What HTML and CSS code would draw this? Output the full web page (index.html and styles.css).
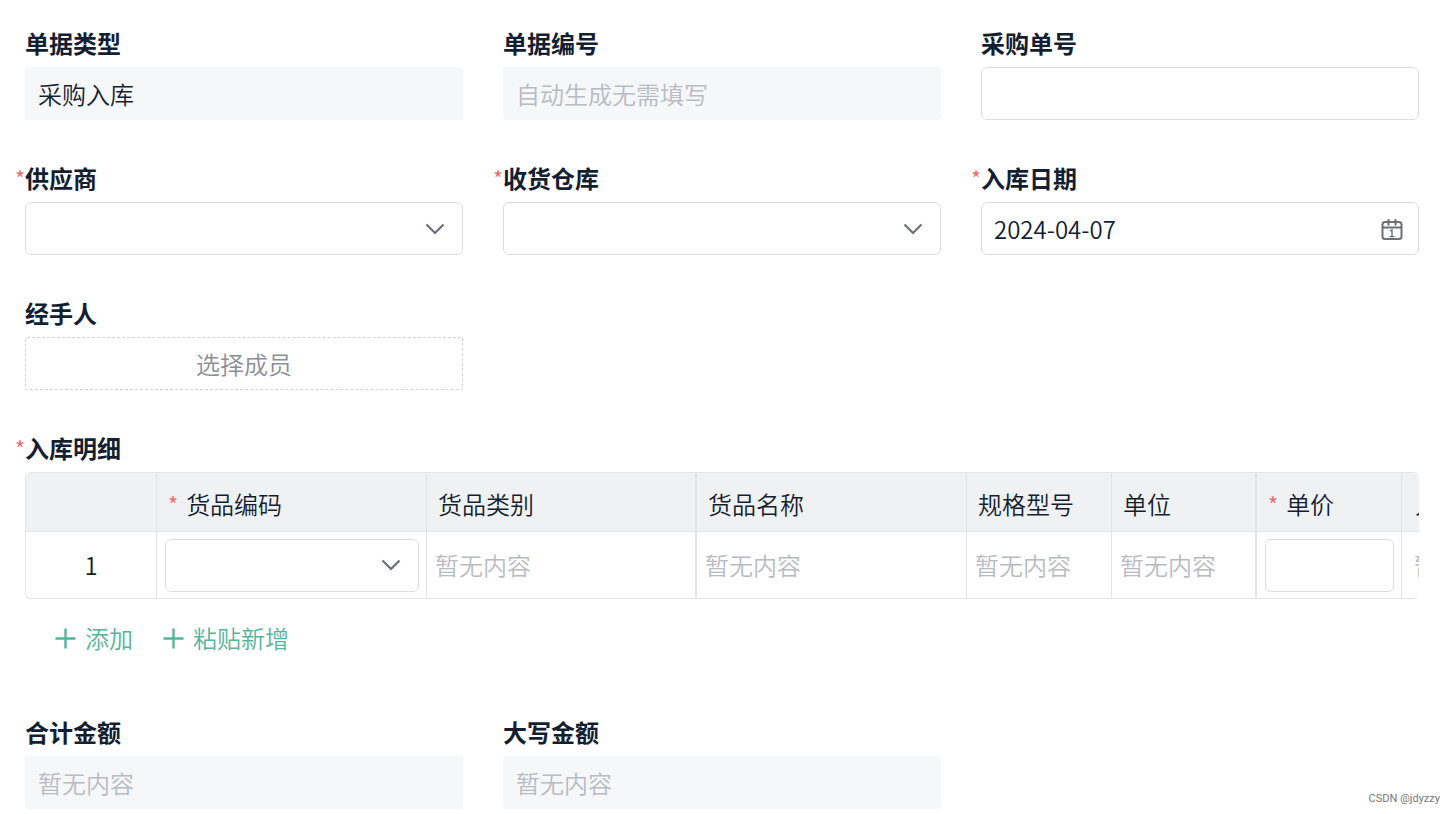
FILE: index.html
```html
<!DOCTYPE html>
<html lang="zh-CN">
<head>
<meta charset="utf-8">
<meta name="viewport" content="width=device-width, initial-scale=1">
<title>采购入库</title>
<link rel="stylesheet" href="styles.css">
</head>
<body>
<svg class="sprite" aria-hidden="true">
  <symbol id="chevron" viewBox="0 0 20 20"><path d="M1.500 5.500 10 14 18.500 5.500" fill="none" stroke="currentColor" stroke-width="2.200"/></symbol>
  <symbol id="plus" viewBox="0 0 22 22"><path d="M11 .5v21M.5 11h21" fill="none" stroke="currentColor" stroke-width="2.500"/></symbol>
  <symbol id="calendar" viewBox="0 0 22 22"><g fill="none" stroke="currentColor" stroke-width="2"><rect x="1.500" y="4" width="19" height="17" rx="2.500"/><path d="M1.500 9.500h19M7.500 1v6.500M14.500 1v6.500"/><path d="M9 12.800l2-1v6.700M8.500 18.600h5" stroke-width="1.400"/></g></symbol>
</svg>
<form class="form">
  <div class="field">
    <label class="label" for="type">单据类型</label>
    <input class="control filled" id="type" type="text" value="采购入库" readonly>
  </div>
  <div class="field">
    <label class="label" for="number">单据编号</label>
    <input class="control filled" id="number" type="text" placeholder="自动生成无需填写" readonly>
  </div>
  <div class="field">
    <label class="label" for="order">采购单号</label>
    <input class="control" id="order" type="text">
  </div>
  <div class="field">
    <label class="label required" for="supplier">供应商</label>
    <div class="picker">
      <select class="control" id="supplier"><option></option></select>
      <svg class="chevron" aria-hidden="true"><use href="#chevron"/></svg>
    </div>
  </div>
  <div class="field">
    <label class="label required" for="warehouse">收货仓库</label>
    <div class="picker">
      <select class="control" id="warehouse"><option></option></select>
      <svg class="chevron" aria-hidden="true"><use href="#chevron"/></svg>
    </div>
  </div>
  <div class="field">
    <label class="label required" for="date">入库日期</label>
    <div class="picker">
      <input class="control" id="date" type="text" value="2024-04-07">
      <svg class="calendar" aria-hidden="true"><use href="#calendar"/></svg>
    </div>
  </div>
  <div class="field">
    <label class="label" for="member">经手人</label>
    <button class="control member" id="member" type="button">选择成员</button>
  </div>
  <section class="field wide">
    <h2 class="label required" id="details">入库明细</h2>
    <div class="table-wrap">
      <table class="table" aria-labelledby="details">
        <colgroup>
          <col class="col-index"><col class="col-large"><col class="col-large"><col class="col-large"><col class="col-small"><col class="col-small"><col class="col-small"><col class="col-large">
        </colgroup>
        <thead>
          <tr>
            <th></th>
            <th><span class="star">*</span>货品编码</th>
            <th class="thick">货品类别</th>
            <th>货品名称</th>
            <th>规格型号</th>
            <th class="thick">单位</th>
            <th><span class="star">*</span>单价</th>
            <th>入库金额</th>
          </tr>
        </thead>
        <tbody>
          <tr>
            <td class="index">1</td>
            <td class="editor">
              <div class="picker">
                <select class="control" aria-label="货品编码"><option></option></select>
                <svg class="chevron" aria-hidden="true"><use href="#chevron"/></svg>
              </div>
            </td>
            <td class="thick">暂无内容</td>
            <td>暂无内容</td>
            <td>暂无内容</td>
            <td class="thick">暂无内容</td>
            <td class="editor"><input class="control" type="text" aria-label="单价"></td>
            <td>暂无内容</td>
          </tr>
        </tbody>
      </table>
    </div>
    <div class="actions">
      <button class="action" type="button"><svg class="plus" aria-hidden="true"><use href="#plus"/></svg>添加</button>
      <button class="action" type="button"><svg class="plus" aria-hidden="true"><use href="#plus"/></svg>粘贴新增</button>
    </div>
  </section>
  <div class="field">
    <label class="label" for="total">合计金额</label>
    <input class="control filled" id="total" type="text" placeholder="暂无内容" readonly>
  </div>
  <div class="field">
    <label class="label" for="words">大写金额</label>
    <input class="control filled" id="words" type="text" placeholder="暂无内容" readonly>
  </div>
</form>
<div class="watermark">CSDN @jdyzzy</div>
</body>
</html>
```

FILE: styles.css
```css
* {
  box-sizing: border-box;
}

body {
  margin: 0;
  background: #fff;
  color: #141e31;
  font-family: "Noto Sans CJK SC", sans-serif;
  font-size: 24px;
  font-weight: 350;
  line-height: 36px;
}

.sprite {
  display: none;
}

.form {
  display: grid;
  grid-template-columns: repeat(3, minmax(0, 1fr));
  gap: 41px 40px;
  padding: 26px 37px 5px 25px;
}

.field {
  display: flex;
  flex-direction: column;
  gap: 7px;
}

.wide {
  grid-column: 1 / -1;
}

.label {
  position: relative;
  margin: 0;
  font-size: 24px;
  font-weight: 700;
  line-height: 34px;
}

.required::before {
  content: "*";
  position: absolute;
  right: 100%;
  color: #e56a6a;
  font-weight: 350;
  font-size: 22px;
}

.control {
  width: 100%;
  height: 53px;
  padding: 0 12px;
  border: 1px solid #dcdde0;
  border-radius: 6px;
  outline: none;
  background: #fff;
  color: inherit;
  font: inherit;
  appearance: none;
}

.control::placeholder {
  color: #b8bbc1;
  opacity: 1;
}

.filled {
  border-color: #f5f7f9;
  border-radius: 3px;
  background: #f5f7f9;
}

.member {
  border: 1px dashed #d0d2d6;
  border-radius: 2px;
  color: #8a8e96;
}

.picker {
  display: grid;
  align-items: center;
}

.picker > * {
  grid-area: 1 / 1;
}

.chevron,
.calendar {
  justify-self: end;
  color: #6a6f7a;
  pointer-events: none;
}

.chevron {
  width: 20px;
  height: 20px;
  margin-right: 18px;
}

.calendar {
  width: 22px;
  height: 22px;
  margin-right: 16px;
}

.table-wrap {
  overflow: hidden;
  border: 1px solid #e4e6e8;
  border-right: 0;
  border-radius: 6px;
}

.table {
  width: 1646px;
  border-spacing: 0;
  table-layout: fixed;
}

.col-index {
  width: 131px;
}

.col-large {
  width: 270px;
}

.col-small {
  width: 145px;
}

.table th,
.table td {
  border-right: 1px solid #e2e4e6;
  text-align: left;
  white-space: nowrap;
}

.table th {
  height: 59px;
  padding: 4px 11px 0;
  border-bottom: 1px solid #e2e4e6;
  background: #f0f1f3;
  font-weight: 350;
}

.table td {
  height: 66px;
  padding: 0 8px;
  color: #b8bbc1;
}

.table th:last-child {
  padding-left: 13px;
}

.table td:last-child {
  padding-left: 12px;
}

.table .thick {
  border-right-width: 2px;
}

.table .index {
  color: #141e31;
  text-align: center;
}

.table .editor {
  padding: 0 7px 0 8px;
}

.star {
  margin-right: 8px;
  color: #e56a6a;
  font-size: 22px;
  line-height: 20px;
}

.actions {
  display: flex;
  gap: 30px;
  padding: 14px 30px 18px;
}

.action {
  display: flex;
  align-items: center;
  gap: 9px;
  padding: 0;
  border: 0;
  background: none;
  color: #55b59b;
  font: inherit;
}

.plus {
  width: 21px;
  height: 21px;
}

.watermark {
  position: absolute;
  right: 16px;
  bottom: 7px;
  color: #777;
  font: 11px/16px Roboto, sans-serif;
}
```
